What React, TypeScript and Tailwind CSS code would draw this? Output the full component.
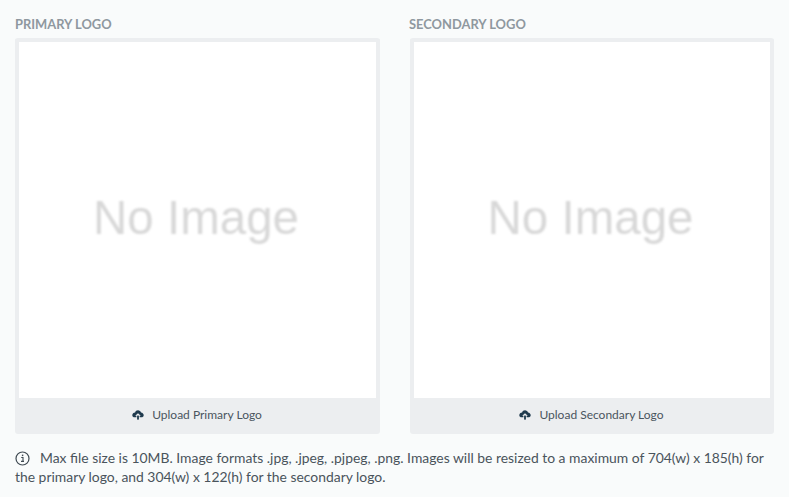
import React from "react";

function UploadIcon() {
  return (
    <svg width="12" height="10" viewBox="0 0 12 10" className="shrink-0">
      <path
        d="M6 0.3C4.6 0.3 3.5 1.2 3.1 2.5C1.5 2.6 0.3 3.8 0.3 5.2C0.3 6.5 1.4 7.3 2.6 7.3H4.4V5.8H3.2L6 3.2L8.8 5.8H7.6V7.3H9.4C10.6 7.3 11.7 6.5 11.7 5.2C11.7 3.9 10.6 2.8 9 2.6C8.6 1.2 7.4 0.3 6 0.3Z"
        fill="#1f3a4d"
      />
      <rect x="5.1" y="5.6" width="1.8" height="4" fill="#1f3a4d" />
    </svg>
  );
}

function InfoIcon() {
  return (
    <svg width="15" height="15" viewBox="0 0 15 15" className="shrink-0" fill="none">
      <circle cx="7.5" cy="7.5" r="6.5" stroke="#3f4a52" strokeWidth="1.2" />
      <rect x="6.9" y="3.6" width="1.4" height="1.5" fill="#3f4a52" />
      <path d="M6.2 6.5H8V10.4H9M6 10.4H8" stroke="#3f4a52" strokeWidth="1.1" />
    </svg>
  );
}

function LogoCard({ title, upload, className }: { title: string; upload: string; className: string }) {
  return (
    <div className={className}>
      <h3 className="mb-[6px] h-[18px] text-[12.9px] leading-[20px] font-bold text-[#8f989f] uppercase">{title}</h3>
      <div className="flex h-[396px] flex-col overflow-hidden rounded-[3px] border-x-4 border-t-4 border-[#eceef0]">
        <div className="flex h-[356px] items-center justify-center bg-white pr-[3px] pb-[4px]">
          <span className="blur-[1px] font-['Liberation_Sans',sans-serif] text-[47.5px] leading-none text-[#d8d8d8]">
            No Image
          </span>
        </div>
        <div className="flex flex-1 items-center justify-center gap-[8px] bg-[#eceef0] pr-[1px] pb-[3px] text-[12px] text-[#4a555e]">
          <UploadIcon />
          <span>{upload}</span>
        </div>
      </div>
    </div>
  );
}

export default function App() {
  return (
    <main className="h-[497px] w-[789px] overflow-hidden bg-[#f9fbfb] px-[15px] pt-[14px] font-['Lato',sans-serif]">
      <div className="flex">
        <LogoCard title="Primary Logo" upload="Upload Primary Logo" className="w-[365px]" />
        <LogoCard title="Secondary Logo" upload="Upload Secondary Logo" className="ml-[30px] w-[364px] [&>h3]:-ml-px" />
      </div>
      <p className="mt-[14px] w-[755px] text-[13.9px] leading-[19px] text-[#4a545c]">
        <span className="mr-[10px] inline-block align-[-3px]">
          <InfoIcon />
        </span>
        Max file size is 10MB. Image formats .jpg, .jpeg, .pjpeg, .png. Images will be resized to a maximum of 704(w) x 185(h) for the primary logo, and 304(w) x 122(h) for the secondary logo.
      </p>
    </main>
  );
}
